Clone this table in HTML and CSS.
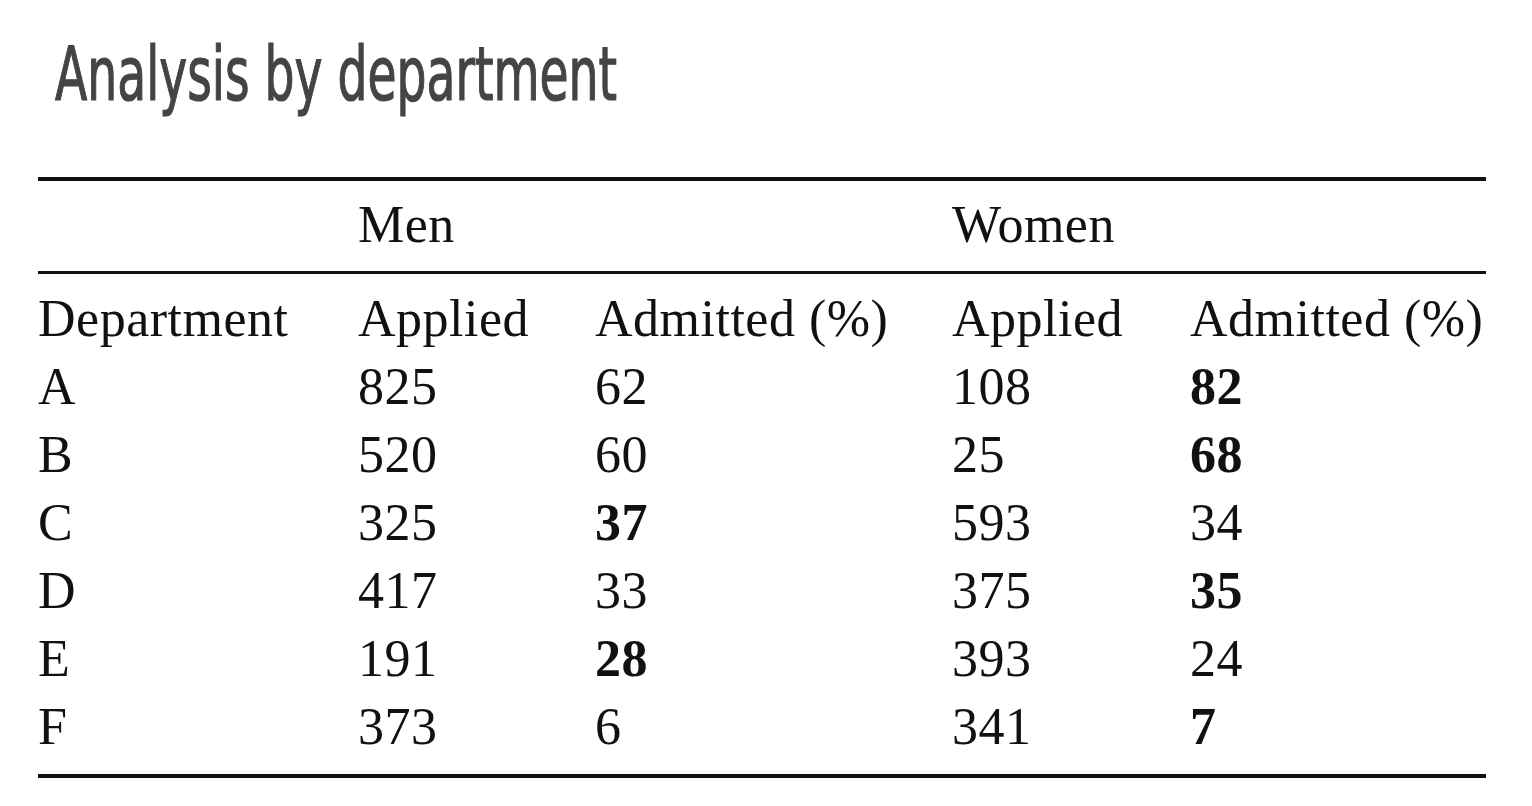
FILE: index.html
```html
<!DOCTYPE html>
<html lang="en">
<head>
<meta charset="utf-8">
<title>Analysis by department</title>
<link rel="stylesheet" href="styles.css">
</head>
<body>
<div class="page">
  <h1 class="title"><span class="title-text">Analysis by department</span></h1>
  <div class="tbl">
    <div class="row group">
      <span></span>
      <span class="span2">Men</span>
      <span class="span2">Women</span>
    </div>
    <div class="tbody">
      <div class="row"><span>Department</span><span>Applied</span><span>Admitted (%)</span><span>Applied</span><span>Admitted (%)</span></div>
      <div class="row"><span>A</span><span>825</span><span>62</span><span>108</span><span class="b">82</span></div>
      <div class="row"><span>B</span><span>520</span><span>60</span><span>25</span><span class="b">68</span></div>
      <div class="row"><span>C</span><span>325</span><span class="b">37</span><span>593</span><span>34</span></div>
      <div class="row"><span>D</span><span>417</span><span>33</span><span>375</span><span class="b">35</span></div>
      <div class="row"><span>E</span><span>191</span><span class="b">28</span><span>393</span><span>24</span></div>
      <div class="row"><span>F</span><span>373</span><span>6</span><span>341</span><span class="b">7</span></div>
    </div>
  </div>
</div>
</body>
</html>
```

FILE: styles.css
```css
html, body {
  margin: 0;
  padding: 0;
  background: #ffffff;
}

.page {
  padding: 37px 46px 0 38px;
}

.title {
  margin: 0 0 65px 17px;
  height: 75px;
  font-family: "DejaVu Sans Condensed", "Liberation Sans", sans-serif;
  font-size: 75px;
  line-height: 75px;
  font-weight: normal;
  color: #444444;
  white-space: nowrap;
}

.title-text {
  display: inline-block;
  transform: scaleX(0.70);
  transform-origin: left center;
  -webkit-text-stroke: 1.2px #444444;
}

.tbl {
  width: 1448px;
  border-top: 4px solid #111;
  border-bottom: 4px solid #111;
  font-family: "Liberation Serif", "DejaVu Serif", serif;
  font-size: 52px;
  line-height: 68px;
  letter-spacing: 0.5px;
  color: #111;
}

.row {
  display: grid;
  grid-template-columns: 320px 237px 357px 238px 296px;
  height: 68px;
  white-space: nowrap;
}

.group {
  padding: 10px 0 12px;
  border-bottom: 3px solid #111;
}

.span2 {
  grid-column: span 2;
}

.tbody {
  padding: 11px 0 13px;
}

.b {
  font-weight: bold;
}
```
